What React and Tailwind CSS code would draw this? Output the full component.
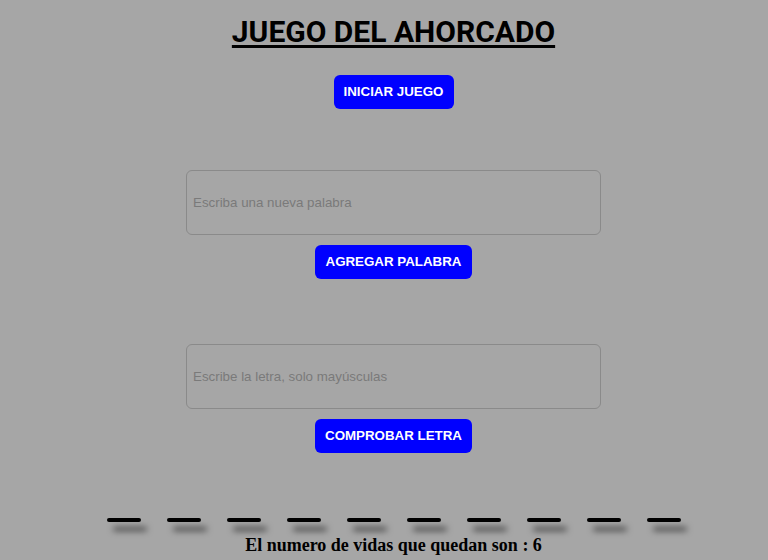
export default function App() {
  const dashes = Array.from({ length: 10 });

  return (
    <div className="min-h-[560px] bg-[#a6a6a6] pl-[19px] flex flex-col items-center font-['Roboto',sans-serif]">
      <h1 className="mt-[14px] text-[30px] leading-[36px] font-bold text-black underline decoration-[3px] underline-offset-[3px]">
        JUEGO DEL AHORCADO
      </h1>

      <button className="mt-[25px] h-[34px] w-[120px] rounded-[6px] bg-[#0000ff] text-white text-[13.33px] font-bold font-['Liberation_Sans',sans-serif]">
        INICIAR JUEGO
      </button>

      <input
        placeholder="Escriba una nueva palabra"
        className="mt-[61px] h-[65px] w-[415px] rounded-[6px] border border-[#8a8a8a] bg-transparent px-[6px] text-[13.33px] font-['Liberation_Sans',sans-serif] placeholder:text-[#7a7a7a] outline-none"
      />
      <button className="mt-[10px] h-[34px] w-[157px] rounded-[6px] bg-[#0000ff] text-white text-[13.33px] font-bold font-['Liberation_Sans',sans-serif]">
        AGREGAR PALABRA
      </button>

      <input
        placeholder="Escribe la letra, solo mayúsculas"
        className="mt-[65px] h-[65px] w-[415px] rounded-[6px] border border-[#8a8a8a] bg-transparent px-[6px] text-[13.33px] font-['Liberation_Sans',sans-serif] placeholder:text-[#7a7a7a] outline-none"
      />
      <button className="mt-[10px] h-[34px] w-[157px] rounded-[6px] bg-[#0000ff] text-white text-[13.33px] font-bold font-['Liberation_Sans',sans-serif]">
        COMPROBAR LETRA
      </button>

      <div className="mt-[65px] flex gap-[26px]">
        {dashes.map((_, i) => (
          <div
            key={i}
            className="h-[4px] w-[34px] rounded-full bg-black shadow-[6px_9px_6px_rgba(0,0,0,0.6)]"
          />
        ))}
      </div>

      <p className="mt-[13px] font-['Liberation_Serif',serif] text-[18px] leading-[20px] font-bold text-black">
        El numero de vidas que quedan son : 6
      </p>
    </div>
  );
}
